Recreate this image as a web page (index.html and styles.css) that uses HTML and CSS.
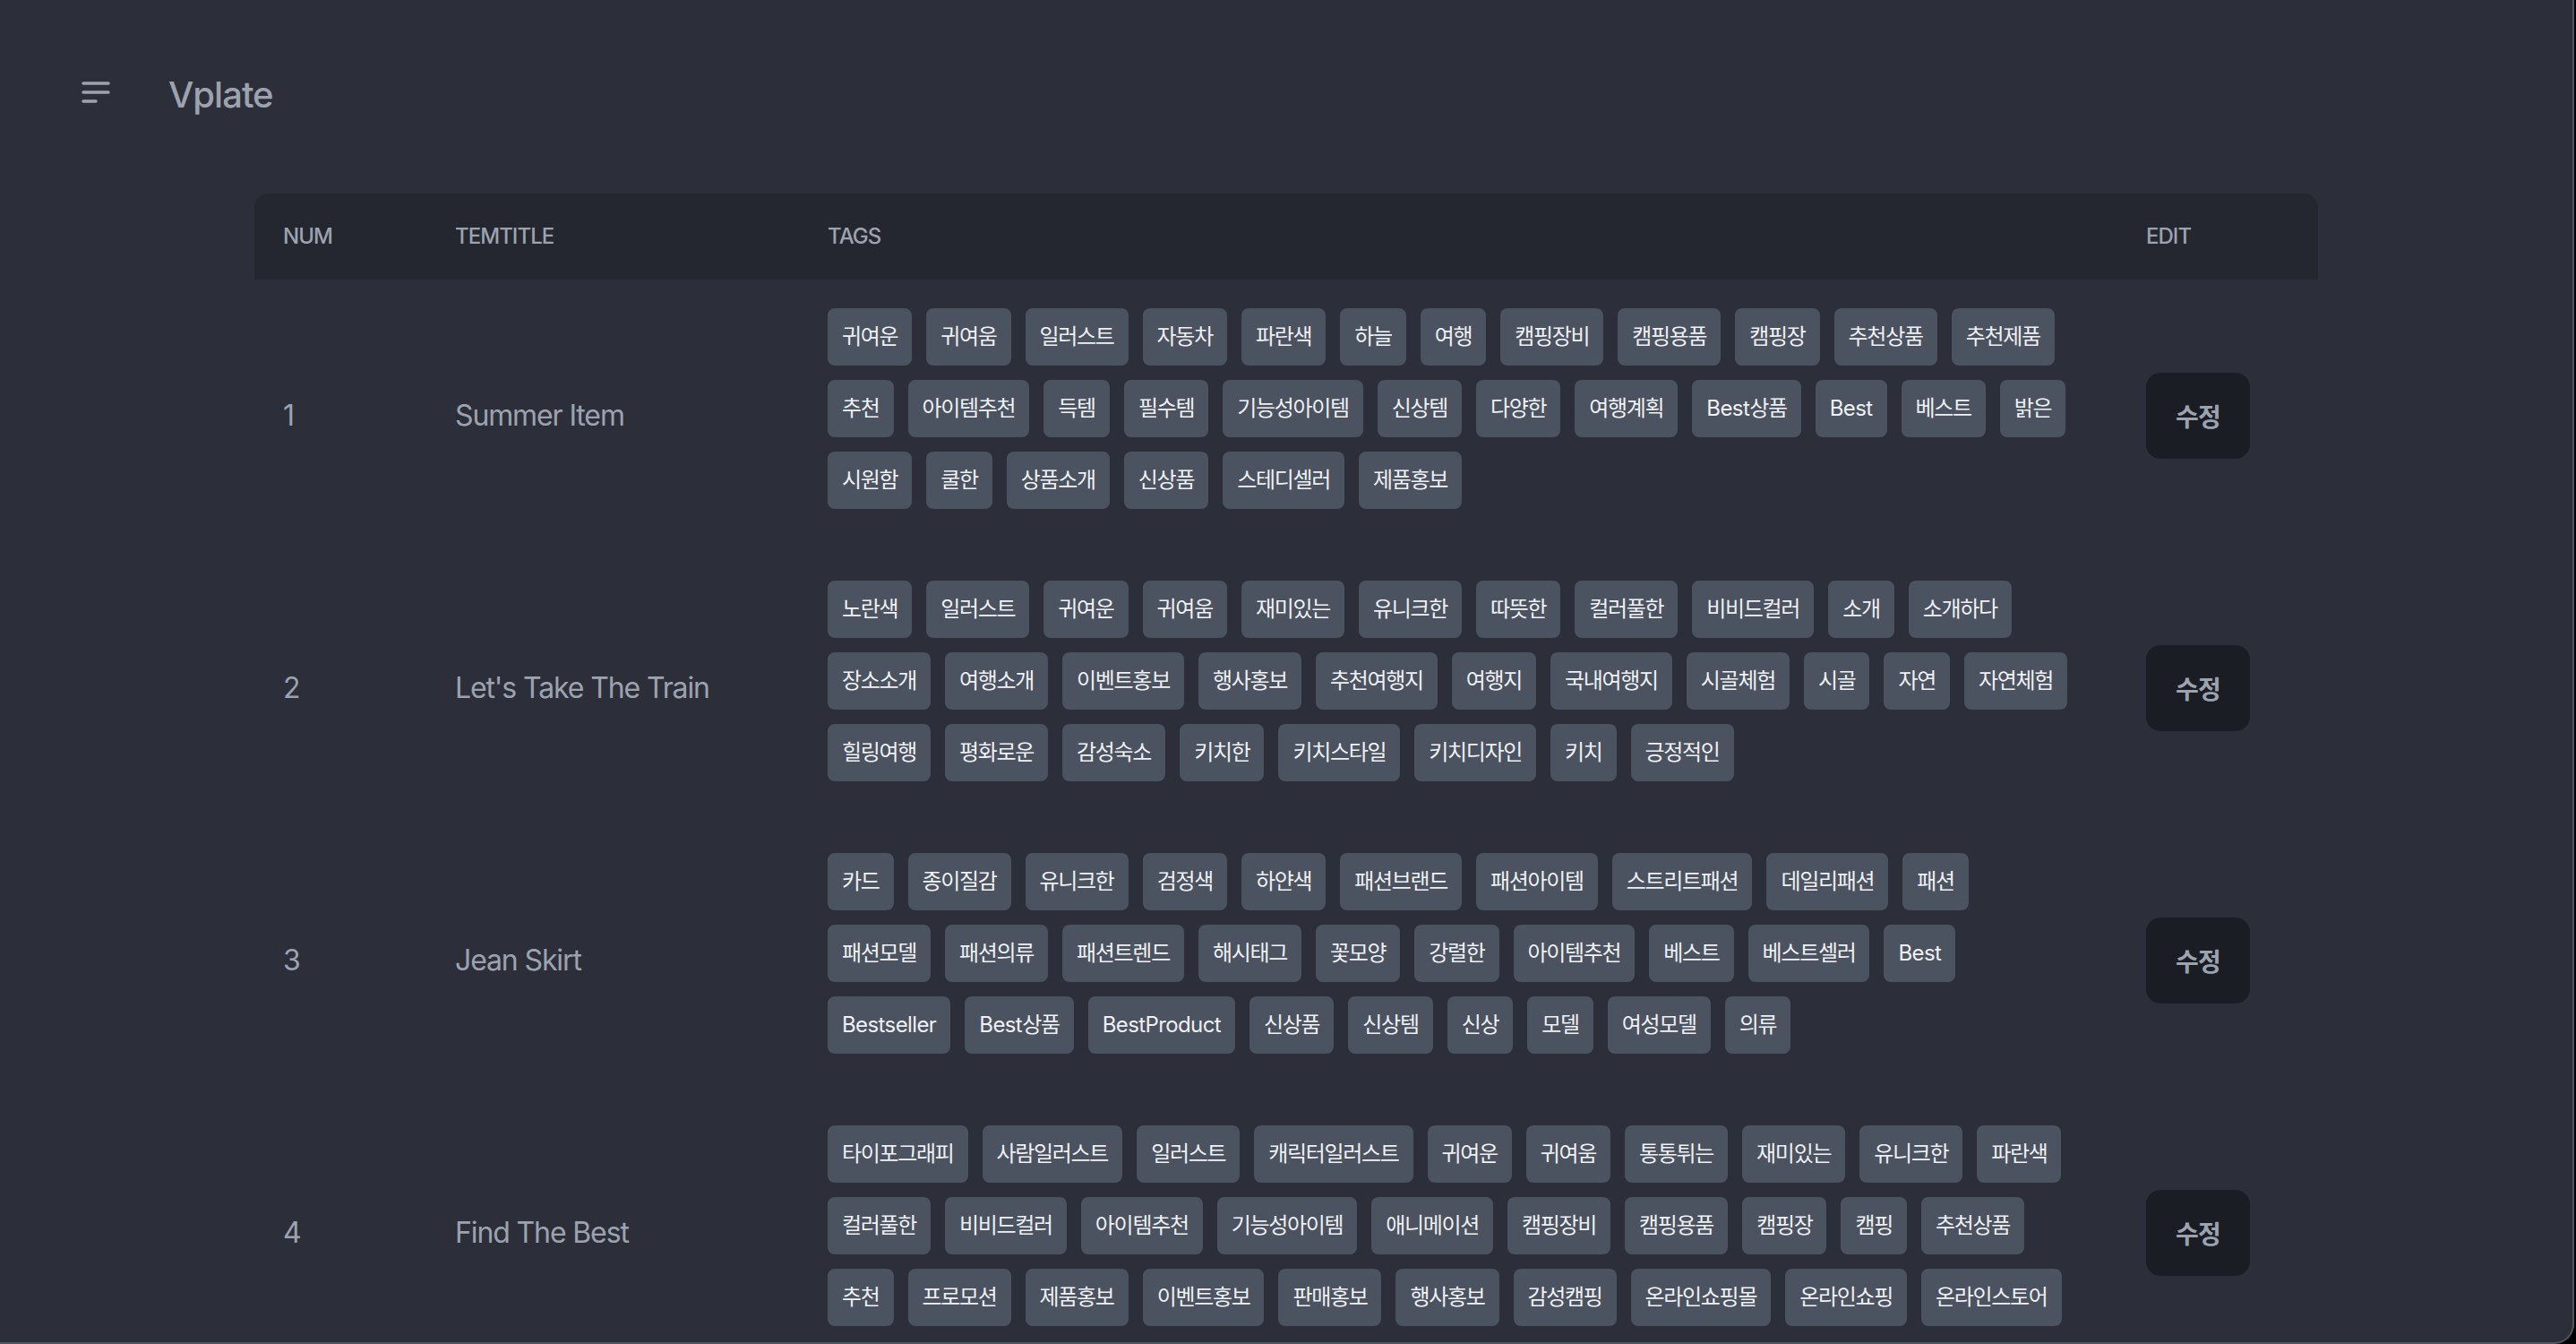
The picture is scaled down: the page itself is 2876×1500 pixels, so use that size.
FILE: index.html
```html
<!DOCTYPE html>
<html lang="ko">
<head>
<meta charset="utf-8">
<title>Vplate</title>
<link rel="stylesheet" href="styles.css">
</head>
<body>
<div class="window">
  <header class="topbar">
    <svg class="menu-icon" width="32" height="26" viewBox="0 0 32 26" aria-hidden="true">
      <path d="M2 3H30M2 13H30M2 23H16" stroke="#9ca3af" stroke-width="3.4" stroke-linecap="round" fill="none"/>
    </svg>
    <h1 class="brand" lang="en">Vplate</h1>
  </header>
  <main class="content">
    <table class="tem-table">
      <thead>
        <tr>
          <th class="col-num">Num</th>
          <th class="col-title">temTitle</th>
          <th class="col-tags">Tags</th>
          <th class="col-edit">Edit</th>
        </tr>
      </thead>
      <tbody>
        <tr>
          <td class="num">1</td>
          <td class="title">Summer Item</td>
          <td class="tags-cell"><div class="tags">
            <span class="tag">귀여운</span><span class="tag">귀여움</span><span class="tag">일러스트</span><span class="tag">자동차</span><span class="tag">파란색</span><span class="tag">하늘</span><span class="tag">여행</span><span class="tag">캠핑장비</span><span class="tag">캠핑용품</span><span class="tag">캠핑장</span><span class="tag">추천상품</span><span class="tag">추천제품</span><span class="tag">추천</span><span class="tag">아이템추천</span><span class="tag">득템</span><span class="tag">필수템</span><span class="tag">기능성아이템</span><span class="tag">신상템</span><span class="tag">다양한</span><span class="tag">여행계획</span><span class="tag"><span lang="en">Best</span>상품</span><span class="tag"><span lang="en">Best</span></span><span class="tag">베스트</span><span class="tag">밝은</span><span class="tag">시원함</span><span class="tag">쿨한</span><span class="tag">상품소개</span><span class="tag">신상품</span><span class="tag">스테디셀러</span><span class="tag">제품홍보</span>
          </div></td>
          <td class="edit"><button class="edit-btn">수정</button></td>
        </tr>
        <tr>
          <td class="num">2</td>
          <td class="title">Let's Take The Train</td>
          <td class="tags-cell"><div class="tags">
            <span class="tag">노란색</span><span class="tag">일러스트</span><span class="tag">귀여운</span><span class="tag">귀여움</span><span class="tag">재미있는</span><span class="tag">유니크한</span><span class="tag">따뜻한</span><span class="tag">컬러풀한</span><span class="tag">비비드컬러</span><span class="tag">소개</span><span class="tag">소개하다</span><span class="tag">장소소개</span><span class="tag">여행소개</span><span class="tag">이벤트홍보</span><span class="tag">행사홍보</span><span class="tag">추천여행지</span><span class="tag">여행지</span><span class="tag">국내여행지</span><span class="tag">시골체험</span><span class="tag">시골</span><span class="tag">자연</span><span class="tag">자연체험</span><span class="tag">힐링여행</span><span class="tag">평화로운</span><span class="tag">감성숙소</span><span class="tag">키치한</span><span class="tag">키치스타일</span><span class="tag">키치디자인</span><span class="tag">키치</span><span class="tag">긍정적인</span>
          </div></td>
          <td class="edit"><button class="edit-btn">수정</button></td>
        </tr>
        <tr>
          <td class="num">3</td>
          <td class="title">Jean Skirt</td>
          <td class="tags-cell"><div class="tags">
            <span class="tag">카드</span><span class="tag">종이질감</span><span class="tag">유니크한</span><span class="tag">검정색</span><span class="tag">하얀색</span><span class="tag">패션브랜드</span><span class="tag">패션아이템</span><span class="tag">스트리트패션</span><span class="tag">데일리패션</span><span class="tag">패션</span><span class="tag">패션모델</span><span class="tag">패션의류</span><span class="tag">패션트렌드</span><span class="tag">해시태그</span><span class="tag">꽃모양</span><span class="tag">강렬한</span><span class="tag">아이템추천</span><span class="tag">베스트</span><span class="tag">베스트셀러</span><span class="tag"><span lang="en">Best</span></span><span class="tag"><span lang="en">Bestseller</span></span><span class="tag"><span lang="en">Best</span>상품</span><span class="tag"><span lang="en">BestProduct</span></span><span class="tag">신상품</span><span class="tag">신상템</span><span class="tag">신상</span><span class="tag">모델</span><span class="tag">여성모델</span><span class="tag">의류</span>
          </div></td>
          <td class="edit"><button class="edit-btn">수정</button></td>
        </tr>
        <tr>
          <td class="num">4</td>
          <td class="title">Find The Best</td>
          <td class="tags-cell"><div class="tags">
            <span class="tag">타이포그래피</span><span class="tag">사람일러스트</span><span class="tag">일러스트</span><span class="tag">캐릭터일러스트</span><span class="tag">귀여운</span><span class="tag">귀여움</span><span class="tag">통통튀는</span><span class="tag">재미있는</span><span class="tag">유니크한</span><span class="tag">파란색</span><span class="tag">컬러풀한</span><span class="tag">비비드컬러</span><span class="tag">아이템추천</span><span class="tag">기능성아이템</span><span class="tag">애니메이션</span><span class="tag">캠핑장비</span><span class="tag">캠핑용품</span><span class="tag">캠핑장</span><span class="tag">캠핑</span><span class="tag">추천상품</span><span class="tag">추천</span><span class="tag">프로모션</span><span class="tag">제품홍보</span><span class="tag">이벤트홍보</span><span class="tag">판매홍보</span><span class="tag">행사홍보</span><span class="tag">감성캠핑</span><span class="tag">온라인쇼핑몰</span><span class="tag">온라인쇼핑</span><span class="tag">온라인스토어</span>
          </div></td>
          <td class="edit"><button class="edit-btn">수정</button></td>
        </tr>
      </tbody>
    </table>
  </main>
</div>
</body>
</html>
```

FILE: styles.css
```css
html, body {
  margin: 0;
  padding: 0;
  height: 100%;
  overflow: hidden;
  background: #000;
}

body {
  font-family: "Inter", "Noto Sans CJK KR", sans-serif;
  color: #9ca3af;
  letter-spacing: -0.03em;
}

.window {
  box-sizing: border-box;
  height: 1500px;
  width: 2874px;
  overflow: hidden;
  background: #2c2f3a;
  border-right: 2px solid #4f5561;
  border-bottom: 2px solid #4f5561;
  border-bottom-right-radius: 22px;
}

.topbar {
  display: flex;
  align-items: center;
  height: 212px;
  padding-left: 91px;
  box-sizing: border-box;
}

.menu-icon {
  display: block;
  margin-bottom: 6px;
}

.brand {
  margin: 0 0 0 65px;
  font-size: 40px;
  line-height: 56px;
  font-weight: 500;
  color: #9ca3af;
  letter-spacing: -0.025em;
}

.content {
  padding: 4px 0 0 284px;
}

.tem-table {
  width: 2304px;
  border-collapse: separate;
  border-spacing: 0;
  table-layout: fixed;
}

.tem-table thead th {
  background: #24272f;
  height: 96px;
  padding: 0 32px;
  text-align: left;
  font-size: 24px;
  line-height: 32px;
  font-weight: 500;
  text-transform: uppercase;
  color: #9ca3af;
  letter-spacing: -0.04em;
}

.tem-table thead th:first-child { border-top-left-radius: 16px; }
.tem-table thead th:last-child { border-top-right-radius: 16px; }

.col-num { width: 128px; }
.col-title { width: 352px; }
.col-tags { width: 1408px; }
.col-edit { width: 160px; }

.tem-table td {
  padding: 32px;
  vertical-align: middle;
}

.num, .title {
  font-size: 32px;
  line-height: 48px;
  color: #9ca3af;
}

.title {
  letter-spacing: -0.035em;
}

.tags-cell {
  padding-bottom: 32px;
}

.tags {
  display: flex;
  flex-wrap: wrap;
}

.tag {
  display: block;
  margin: 0 16px 16px 0;
  padding: 16px;
  font-size: 24px;
  line-height: 32px;
  color: #eef0f3;
  background: #4b5260;
  border-radius: 8px;
  letter-spacing: -0.055em;
  font-feature-settings: "palt" 1;
}

.tag [lang="en"] {
  letter-spacing: -0.025em;
}

.edit-btn {
  display: block;
  width: 116px;
  height: 96px;
  padding: 0;
  border: 0;
  border-radius: 16px;
  background: #1b1d24;
  color: #9ca3af;
  font-family: "Inter", "Noto Sans CJK KR", sans-serif;
  font-size: 28px;
  font-weight: 600;
  letter-spacing: -0.03em;
}
```
